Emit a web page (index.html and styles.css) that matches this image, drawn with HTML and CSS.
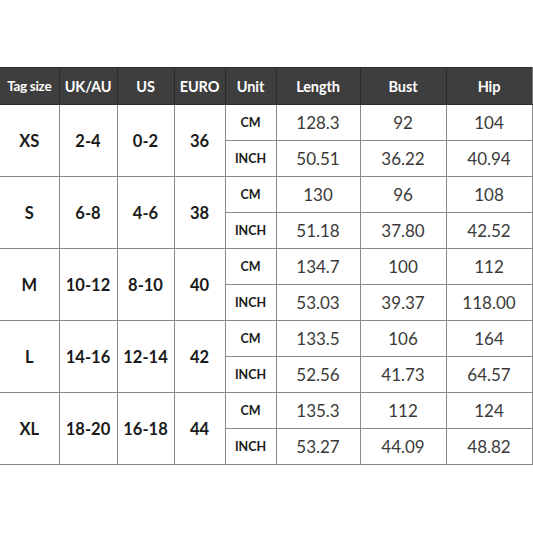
FILE: index.html
```html
<!DOCTYPE html>
<html>
<head>
<meta charset="utf-8">
<link rel="stylesheet" href="styles.css">
</head>
<body>
<div class="page">
<table class="chart">
<colgroup>
<col class="c1"><col class="c2"><col class="c3"><col class="c4"><col class="c5"><col class="c6"><col class="c7"><col class="c8">
</colgroup>
<thead>
<tr class="head"><th>Tag size</th><th>UK/AU</th><th>US</th><th>EURO</th><th>Unit</th><th>Length</th><th>Bust</th><th>Hip</th></tr>
</thead>
<tbody>
<tr class="cm"><td rowspan="2" class="sz">XS</td><td rowspan="2" class="sz">2-4</td><td rowspan="2" class="sz">0-2</td><td rowspan="2" class="sz">36</td><td class="unit">CM</td><td>128.3</td><td>92</td><td>104</td></tr>
<tr class="in"><td class="unit">INCH</td><td>50.51</td><td>36.22</td><td>40.94</td></tr>
<tr class="cm"><td rowspan="2" class="sz">S</td><td rowspan="2" class="sz">6-8</td><td rowspan="2" class="sz">4-6</td><td rowspan="2" class="sz">38</td><td class="unit">CM</td><td>130</td><td>96</td><td>108</td></tr>
<tr class="in"><td class="unit">INCH</td><td>51.18</td><td>37.80</td><td>42.52</td></tr>
<tr class="cm"><td rowspan="2" class="sz">M</td><td rowspan="2" class="sz">10-12</td><td rowspan="2" class="sz">8-10</td><td rowspan="2" class="sz">40</td><td class="unit">CM</td><td>134.7</td><td>100</td><td>112</td></tr>
<tr class="in"><td class="unit">INCH</td><td>53.03</td><td>39.37</td><td>118.00</td></tr>
<tr class="cm"><td rowspan="2" class="sz">L</td><td rowspan="2" class="sz">14-16</td><td rowspan="2" class="sz">12-14</td><td rowspan="2" class="sz">42</td><td class="unit">CM</td><td>133.5</td><td>106</td><td>164</td></tr>
<tr class="in"><td class="unit">INCH</td><td>52.56</td><td>41.73</td><td>64.57</td></tr>
<tr class="cm"><td rowspan="2" class="sz">XL</td><td rowspan="2" class="sz">18-20</td><td rowspan="2" class="sz">16-18</td><td rowspan="2" class="sz">44</td><td class="unit">CM</td><td>135.3</td><td>112</td><td>124</td></tr>
<tr class="in"><td class="unit">INCH</td><td>53.27</td><td>44.09</td><td>48.82</td></tr>
</tbody>
</table>
</div>
</body>
</html>
```
FILE: styles.css
```css
html, body {
  margin: 0;
  padding: 0;
  background: #ffffff;
}
.page {
  padding-top: 67px;
}
.chart {
  border-collapse: collapse;
  table-layout: fixed;
  width: 532px;
  font-family: Lato, "Liberation Sans", sans-serif;
  color: #222;
}
.c1 { width: 59px; }
.c2 { width: 58px; }
.c3 { width: 57px; }
.c4 { width: 51px; }
.c5 { width: 51px; }
.c6 { width: 84px; }
.c7 { width: 86px; }
.c8 { width: 86px; }
.chart th, .chart td {
  border: 1px solid #8a8a8a;
  padding: 0;
  text-align: center;
  vertical-align: middle;
  white-space: nowrap;
}
.chart tr > :first-child { border-left: none; }
.head th {
  background: #3e3e3e;
  color: #ffffff;
  font-weight: 700;
  font-size: 14.5px;
  height: 36px;
  border-top: 1px solid #d0d0d0;
  border-color: #2c2c2c;
  letter-spacing: -0.1px;
}
.head th:first-child { font-size: 13.5px; letter-spacing: -0.3px; }
.head th:last-child { border-right: 1px solid #777; }
.chart td {
  height: 35px;
  font-size: 17px;
}
.chart td.sz {
  font-weight: 700;
  font-size: 16.5px;
  color: #1a1a1a;
}
.chart td.unit {
  font-weight: 700;
  font-size: 12.5px;
  color: #1a1a1a;
}
.chart td:not(.sz):not(.unit) {
  color: #3a3a3a;
}
```
